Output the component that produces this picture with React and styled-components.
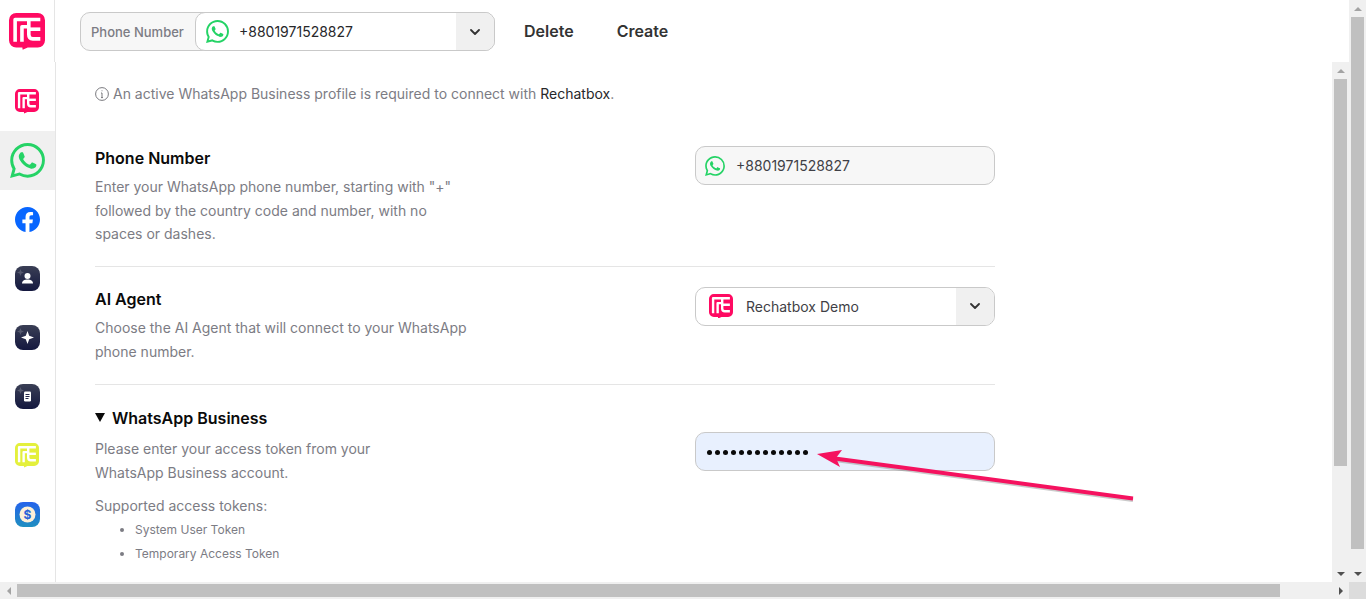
import React from "react";
import styled, { createGlobalStyle } from "styled-components";

const Global = createGlobalStyle`
  html, body { margin: 0; padding: 0; height: 100%; overflow: hidden; background: #fff; }
  * { box-sizing: border-box; }
  body { font-family: Inter, "Liberation Sans", sans-serif; }
`;

const Page = styled.div`
  position: relative;
  width: 1366px; height: 599px;
  display: grid;
  grid-template-columns: 1349px 17px;
  grid-template-rows: 582px 17px;
  overflow: hidden;
`;
const Viewport = styled.div`
  display: flex; flex-direction: column; min-width: 0; min-height: 0; overflow: hidden;
`;
const TopBar = styled.header`
  display: flex; height: 62px; flex: none;
`;
const LogoCell = styled.div`
  width: 55px; flex: none; border-right: 1px solid #e5e5e5;
  display: flex; align-items: flex-start; justify-content: center; padding: 13px 1px 0 0;
`;
const TopControls = styled.div`
  display: flex; align-items: flex-start; padding: 12px 0 0 25px;
`;
const Group = styled.div`
  display: flex; width: 415px; height: 39px;
  border: 1px solid #c9c9c9; border-radius: 10px; background: #f7f7f7;
`;
const GroupLabel = styled.span`
  width: 114px; flex: none; padding-left: 10px;
  display: flex; align-items: center;
  font-size: 13px; font-weight: 500; color: #7c7c84;
`;
const GroupSelect = styled.div`
  flex: 1; margin: -1px -1px -1px 0; display: flex; align-items: stretch; overflow: hidden;
  background: #fff; border: 1px solid #c9c9c9; border-radius: 10px;
`;
const SelectValue = styled.div`
  flex: 1; display: flex; align-items: center; gap: ${p => p.$gap}px; padding-left: ${p => p.$pad}px;
  font-size: 14px; color: ${p => p.$color};
`;
const Chevron = styled.div`
  width: 38px; flex: none; background: #f0f0f0; color: #333;
  display: flex; align-items: center; justify-content: center;
`;
const TopAction = styled.button`
  border: 0; background: none; padding: 0 0 2px; margin: 0 0 0 ${p => p.$ml}px;
  height: 39px; font: 600 16px Inter, sans-serif; color: #333;
`;
const Body = styled.div`
  flex: 1; display: flex; min-height: 0;
`;
const Sidebar = styled.nav`
  width: 56px; flex: none; border-right: 1px solid #e5e5e5; padding-top: 10px;
  display: flex; flex-direction: column;
`;
const SideItem = styled.div`
  height: 59px; flex: none; display: flex; align-items: center; justify-content: center;
  padding-right: 1px;
  background: ${p => (p.$active ? "#f0f0f0" : "transparent")};
`;
const Content = styled.main`
  flex: 1; min-width: 0; overflow: hidden; padding: 22px 0 0 39px;
`;
const Notice = styled.p`
  margin: 0; display: flex; align-items: center; gap: 4px; height: 19px;
  font-size: 14px; line-height: 19px; color: #7c7c84; white-space: nowrap;
`;
const Strong = styled.span`
  color: #27272a;
`;
const Row = styled.section`
  width: 900px; display: grid; grid-template-columns: 600px 300px;
  padding: ${p => p.$pad}; border-bottom: ${p => (p.$last ? "none" : "1px solid #e5e5e5")};
`;
const Title = styled.h3`
  margin: 0 0 ${p => p.$mb}px; font-size: 16px; line-height: 24px; font-weight: 600; color: #0a0a0a;
  display: flex; align-items: center; gap: 7px;
`;
const Desc = styled.p`
  margin: 0; max-width: ${p => p.$w}px; font-size: 14px; line-height: 23.7px; color: #7c7c84;
`;
const SubDesc = styled(Desc)`
  margin-top: 10px;
`;
const Bullets = styled.ul`
  margin: -0.4px 0 0; padding: 0 0 0 40px; font-size: 12px; line-height: 24px; color: #7c7c84;
`;
const Field = styled.div`
  height: 39px; margin-top: ${p => p.$mt}px; display: flex; align-items: stretch; overflow: hidden;
  border: 1px solid #c9c9c9; border-radius: 10px; background: ${p => p.$bg};
`;
const Dots = styled.span`
  display: flex; align-items: center; gap: 3px; padding: 2px 0 0 11px;
`;
const Dot = styled.i`
  width: 5px; height: 5px; border-radius: 50%; background: #0a0a0a;
`;
const Triangle = styled.i`
  width: 0; height: 0; border-left: 5.5px solid transparent; border-right: 5.5px solid transparent;
  border-top: 9px solid #0a0a0a;
`;
const ScrollY = styled.div`
  width: 17px; flex: none; background: #f0f0f0; display: flex; flex-direction: column; align-items: stretch;
`;
const ScrollX = styled.div`
  height: 17px; background: #f0f0f0; display: flex; align-items: stretch;
`;
const Corner = styled.div`
  background: #dcdcdc;
`;
const ArrowBtn = styled.div`
  flex: none; ${p => (p.$h ? "width: 17px;" : "height: 17px;")}
  display: flex; align-items: center; justify-content: center;
`;
const Tri = styled.i`
  width: 0; height: 0; display: block;
  ${p => p.$dir === "up" && `border-left:4px solid transparent;border-right:4px solid transparent;border-bottom:4px solid ${p.$c};`}
  ${p => p.$dir === "down" && `border-left:4px solid transparent;border-right:4px solid transparent;border-top:4px solid ${p.$c};`}
  ${p => p.$dir === "left" && `border-top:4px solid transparent;border-bottom:4px solid transparent;border-right:4px solid ${p.$c};`}
  ${p => p.$dir === "right" && `border-top:4px solid transparent;border-bottom:4px solid transparent;border-left:4px solid ${p.$c};`}
`;
const ThumbY = styled.div`
  margin: 0 2px; height: ${p => p.$h}px; flex: none; background: #c0c0c0;
`;
const ThumbX = styled.div`
  margin: 2px 0; width: ${p => p.$w}px; flex: none; background: #c0c0c0;
`;
const Spacer = styled.div`flex: 1;`;
const Overlay = styled.svg`
  position: absolute; left: 0; top: 0; pointer-events: none;
`;

const Re = ({ size, bg = "#ff0a62", fg = "#fff" }) => (
  <svg width={size} height={size * 1.02} viewBox="0 0 100 102" style={{ display: "block", flex: "none" }}>
    <path fill={bg} d="M20 0h60a20 20 0 0 1 20 20v56a20 20 0 0 1-20 20H52l-14 6-1-6H20A20 20 0 0 1 0 76V20A20 20 0 0 1 20 0z" />
    <g fill="none" stroke={fg} strokeWidth="10" strokeLinejoin="round">
      <path d="M17 80V18H87" />
      <path d="M55 18V60c0 8 4 12 11 12H87" />
      <path d="M55 45H87" />
      <path d="M36 80V38H55" />
    </g>
  </svg>
);

const WhatsApp = ({ size }) => (
  <svg width={size} height={size} viewBox="0 0 24 24" style={{ display: "block", flex: "none" }}>
    <path fill="#25d366" d="M17.472 14.382c-.297-.149-1.758-.867-2.03-.967-.273-.099-.471-.148-.67.15-.197.297-.767.966-.94 1.164-.173.199-.347.223-.644.075-.297-.15-1.255-.463-2.39-1.475-.883-.788-1.48-1.761-1.653-2.059-.173-.297-.018-.458.13-.606.134-.133.298-.347.446-.52.149-.174.198-.298.298-.497.099-.198.05-.371-.025-.52-.075-.149-.669-1.612-.916-2.207-.242-.579-.487-.5-.669-.51-.173-.008-.371-.01-.57-.01-.198 0-.52.074-.792.372-.272.297-1.04 1.016-1.04 2.479 0 1.462 1.065 2.875 1.213 3.074.149.198 2.096 3.2 5.077 4.487.709.306 1.262.489 1.694.625.712.227 1.36.195 1.871.118.571-.085 1.758-.719 2.006-1.413.248-.694.248-1.289.173-1.413-.074-.124-.272-.198-.57-.347m-5.421 7.403h-.004a9.87 9.87 0 0 1-5.031-1.378l-.361-.214-3.741.982.998-3.648-.235-.374a9.86 9.86 0 0 1-1.51-5.26c.001-5.45 4.436-9.884 9.888-9.884 2.64 0 5.122 1.03 6.988 2.898a9.825 9.825 0 0 1 2.893 6.994c-.003 5.45-4.437 9.884-9.885 9.884m8.413-18.297A11.815 11.815 0 0 0 12.05 0C5.495 0 .16 5.335.157 11.892c0 2.096.547 4.142 1.588 5.945L.057 24l6.305-1.654a11.882 11.882 0 0 0 5.683 1.448h.005c6.554 0 11.89-5.335 11.893-11.893a11.821 11.821 0 0 0-3.48-8.413z" />
  </svg>
);

const Facebook = () => (
  <svg width="25" height="25" viewBox="0 0 24 24" style={{ display: "block" }}>
    <path fill="#0866ff" d="M24 12.07C24 5.4 18.63 0 12 0S0 5.4 0 12.07c0 6.03 4.39 11.02 10.13 11.93v-8.44H7.08v-3.49h3.05V9.41c0-3.02 1.79-4.69 4.53-4.69 1.31 0 2.68.23 2.68.23v2.97h-1.51c-1.49 0-1.96.93-1.96 1.89v2.26h3.33l-.53 3.49h-2.8V24C19.61 23.09 24 18.1 24 12.07z" />
  </svg>
);

const AppTile = ({ id, from, to, children, sparkle = true }) => (
  <svg width="25" height="25" viewBox="0 0 25 25" style={{ display: "block" }}>
    <defs>
      <linearGradient id={id} x1="0" y1="0" x2="0" y2="1">
        <stop offset="0" stopColor={from} />
        <stop offset="1" stopColor={to} />
      </linearGradient>
    </defs>
    <rect width="25" height="25" rx="8" fill={`url(#${id})`} />
    {sparkle && <path fill="#fff" opacity=".18" d="M5.5 3l.9 2.6L9 6.5l-2.6.9-.9 2.6-.9-2.6L2 6.5l2.6-.9z" />}
    {children}
  </svg>
);

const Check = () => (
  <svg width="10" height="6" viewBox="0 0 10 6" fill="none" stroke="currentColor" strokeWidth="1.8" strokeLinecap="round" strokeLinejoin="round">
    <path d="M1 1l4 4 4-4" />
  </svg>
);

const Info = () => (
  <svg width="14" height="14" viewBox="0 0 14 14" fill="none" stroke="#6b6b70" strokeWidth="0.9" style={{ flex: "none" }}>
    <circle cx="7" cy="7" r="6.4" />
    <path d="M7 6v4.5M6 6h1M6 10.6h2" />
    <circle cx="7" cy="3.8" r=".5" fill="#6b6b70" stroke="none" />
  </svg>
);

export default function App() {
  return (
    <Page>
      <Global />
      <Viewport>
        <TopBar>
          <LogoCell><Re size={36} /></LogoCell>
          <TopControls>
            <Group>
              <GroupLabel>Phone Number</GroupLabel>
              <GroupSelect>
                <SelectValue $gap={10} $pad={10} $color="#27272a"><WhatsApp size={23} />+8801971528827</SelectValue>
                <Chevron><Check /></Chevron>
              </GroupSelect>
            </Group>
            <TopAction $ml={29}>Delete</TopAction>
            <TopAction $ml={43}>Create</TopAction>
          </TopControls>
        </TopBar>
        <Body>
          <Sidebar>
            <SideItem><Re size={24} /></SideItem>
            <SideItem $active><WhatsApp size={35} /></SideItem>
            <SideItem><Facebook /></SideItem>
            <SideItem>
              <AppTile id="t1" from="#3a3f55" to="#14183f">
                <circle cx="12.5" cy="10" r="3" fill="#fff" />
                <path fill="#fff" d="M7 17.5c0-2.6 2.4-4 5.5-4s5.5 1.4 5.5 4z" />
              </AppTile>
            </SideItem>
            <SideItem>
              <AppTile id="t2" from="#3a3f55" to="#14183f">
                <path fill="#fff" d="M12.5 6l1.7 4.8 4.8 1.7-4.8 1.7-1.7 4.8-1.7-4.8L6 12.5l4.8-1.7z" />
              </AppTile>
            </SideItem>
            <SideItem>
              <AppTile id="t3" from="#3a3f55" to="#14183f">
                <rect x="9" y="7.5" width="7" height="10" rx="1.2" fill="#fff" />
                <path stroke="#23274a" strokeWidth="1" d="M10.5 10.5h4M10.5 12.5h4M10.5 14.5h3" />
              </AppTile>
            </SideItem>
            <SideItem><Re size={24} bg="#e4f03c" /></SideItem>
            <SideItem>
              <AppTile id="t4" from="#2563eb" to="#1f8fc0" sparkle={false}>
                <circle cx="12.5" cy="12.5" r="8" fill="#fdf0d8" />
                <text x="12.5" y="17" textAnchor="middle" fontFamily="Inter, sans-serif" fontSize="12" fontWeight="700" fill="#2a62d8">$</text>
              </AppTile>
            </SideItem>
          </Sidebar>
          <Content>
            <Notice>
              <Info />
              <span>An active WhatsApp Business profile is required to connect with <Strong>Rechatbox</Strong>.</span>
            </Notice>
            <Row $pad="43px 0 19.5px">
              <div>
                <Title $mb={5}>Phone Number</Title>
                <Desc $w={380}>Enter your WhatsApp phone number, starting with "+" followed by the country code and number, with no spaces or dashes.</Desc>
              </div>
              <Field $mt={0} $bg="#f7f7f7">
                <SelectValue $gap={11} $pad={9} $color="#3f3f46"><WhatsApp size={20} />+8801971528827</SelectValue>
              </Field>
            </Row>
            <Row $pad="20px 0 20px">
              <div>
                <Title $mb={5.5}>AI Agent</Title>
                <Desc $w={380}>Choose the AI Agent that will connect to your WhatsApp phone number.</Desc>
              </div>
              <Field $mt={0} $bg="#fff">
                <SelectValue $gap={13} $pad={13} $color="#3f3f46"><Re size={24} />Rechatbox Demo</SelectValue>
                <Chevron><Check /></Chevron>
              </Field>
            </Row>
            <Row $pad="21px 0 0" $last>
              <div>
                <Title $mb={7.4}><Triangle />WhatsApp Business</Title>
                <Desc $w={300}>Please enter your access token from your WhatsApp Business account.</Desc>
                <SubDesc $w={380}>Supported access tokens:</SubDesc>
                <Bullets>
                  <li>System User Token</li>
                  <li>Temporary Access Token</li>
                </Bullets>
              </div>
              <Field $mt={26} $bg="#e8f0fe">
                <Dots>{Array.from({ length: 13 }, (_, i) => <Dot key={i} />)}</Dots>
              </Field>
            </Row>
          </Content>
          <ScrollY>
            <ArrowBtn><Tri $dir="up" $c="#a3a3a3" /></ArrowBtn>
            <ThumbY $h={387} />
            <Spacer />
            <ArrowBtn><Tri $dir="down" $c="#505050" /></ArrowBtn>
          </ScrollY>
        </Body>
      </Viewport>
      <ScrollY>
        <ArrowBtn><Tri $dir="up" $c="#a3a3a3" /></ArrowBtn>
        <ThumbY $h={532} />
        <Spacer />
        <ArrowBtn><Tri $dir="down" $c="#505050" /></ArrowBtn>
      </ScrollY>
      <ScrollX>
        <ArrowBtn $h><Tri $dir="left" $c="#a3a3a3" /></ArrowBtn>
        <ThumbX $w={1263} />
        <Spacer />
        <ArrowBtn $h><Tri $dir="right" $c="#505050" /></ArrowBtn>
      </ScrollX>
      <Corner />
      <Overlay width="1366" height="599" viewBox="0 0 1366 599">
        <path d="M1133 500L835 460" stroke="#8a8a8a" strokeWidth="4" fill="none" opacity=".45" />
        <path d="M1133 498.5L835 458.5" stroke="#f5125f" strokeWidth="4" fill="none" />
        <path d="M817 454L842 450L836 458L840 467z" fill="#f5125f" />
      </Overlay>
    </Page>
  );
}
